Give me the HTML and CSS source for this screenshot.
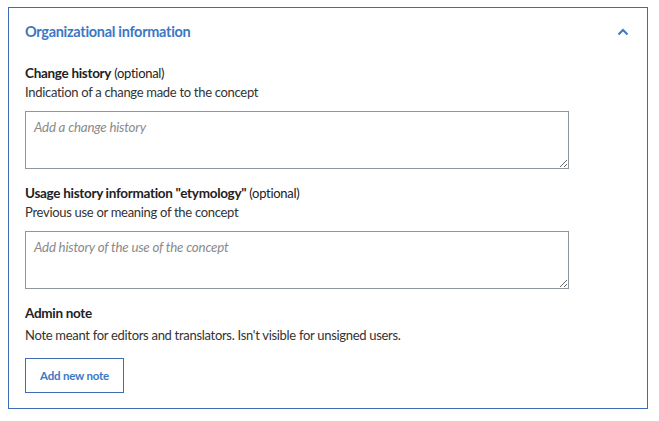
FILE: index.html
```html
<!DOCTYPE html>
<html>
<head>
<meta charset="utf-8">
<link rel="stylesheet" href="styles.css">
</head>
<body>
<section class="panel">
  <div class="panel-header">
    <h2 class="panel-title">Organizational information</h2>
    <svg class="chevron" width="12" height="8" viewBox="0 0 12 8"><polyline points="1.5,6.5 6,2 10.5,6.5" fill="none" stroke="#3b78c4" stroke-width="2"/></svg>
  </div>
  <div class="field">
    <div class="label"><b>Change history</b> (optional)</div>
    <div class="desc">Indication of a change made to the concept</div>
    <textarea class="area" placeholder="Add a change history"></textarea>
  </div>
  <div class="field">
    <div class="label"><b>Usage history information "etymology"</b> (optional)</div>
    <div class="desc">Previous use or meaning of the concept</div>
    <textarea class="area" placeholder="Add history of the use of the concept"></textarea>
  </div>
  <div class="field">
    <div class="label"><b>Admin note</b></div>
    <div class="desc note-desc">Note meant for editors and translators. Isn't visible for unsigned users.</div>
    <button class="btn">Add new note</button>
  </div>
</section>
</body>
</html>
```
FILE: styles.css
```css
html, body { margin: 0; padding: 0; background: #fff; }
body {
  font-family: "Lato", "Liberation Sans", sans-serif;
  font-size: 13px;
  letter-spacing: -0.3px;
  color: #222;
  padding: 7px 11px 0 8px;
}
.panel {
  border: 1px solid #3d6eb3;
  padding: 0 16px 15px 16px;
}
.panel-header {
  display: flex;
  justify-content: space-between;
  align-items: center;
  padding-top: 14px;
  height: 20px;
  margin-bottom: 22px;
}
.panel-title {
  margin: 0;
  font-size: 14.5px;
  font-weight: 700;
  color: #3b78c4;
  line-height: 20px;
}
.chevron { margin-right: 2px; }
.field { display: flex; flex-direction: column; align-items: flex-start; }
.label { line-height: 19px; color: #222; }
.label b { font-weight: 700; font-size: 13.5px; }
.desc { line-height: 19px; color: #333; margin-bottom: 9px; }
.area {
  box-sizing: border-box;
  width: 544px;
  height: 58px;
  border: 1px solid #8e969d;
  border-radius: 0;
  padding: 7px 8px;
  font-family: inherit;
  font-size: 13.3px;
  letter-spacing: -0.2px;
  margin: 0 0 15px 0;
  resize: vertical;
}
.area::placeholder { font-style: italic; color: #8a8a8a; }
.note-desc { margin-top: 3px; margin-bottom: 13px; }
.btn {
  box-sizing: border-box;
  height: 35px;
  width: 99px;
  background: #fff;
  border: 1px solid #3d6eb3;
  color: #3b78c4;
  font-family: inherit;
  font-size: 11.5px;
  letter-spacing: -0.2px;
  font-weight: 700;
  padding: 0;
}
```
